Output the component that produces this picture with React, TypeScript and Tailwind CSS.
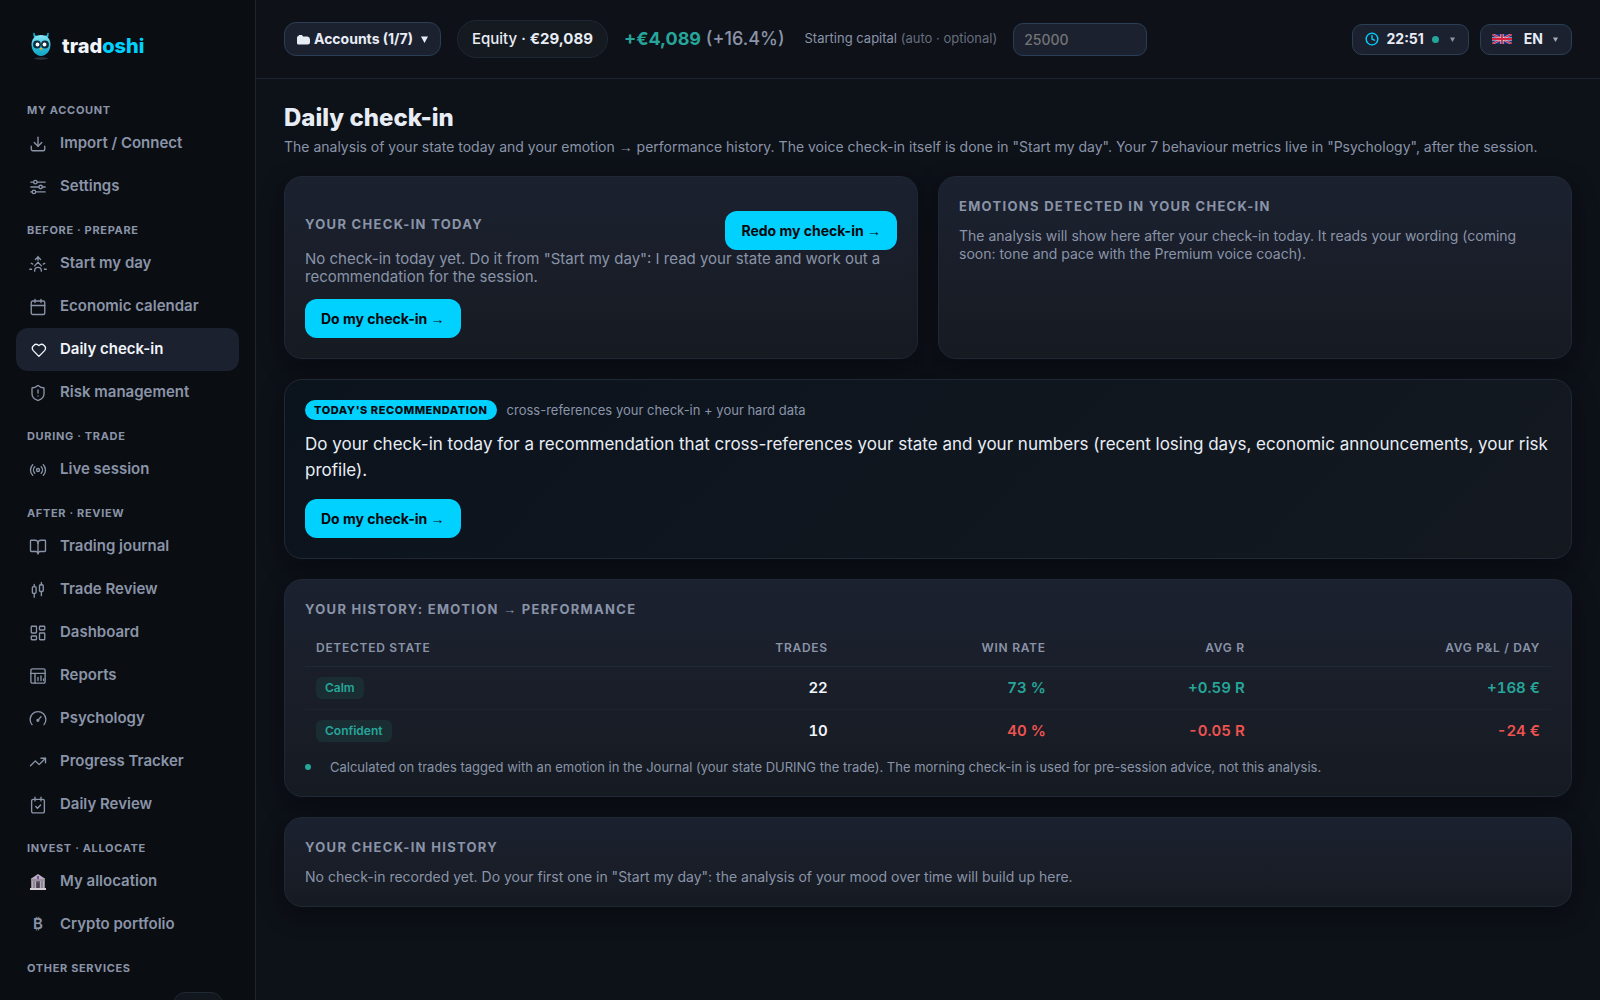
import type { ReactNode } from "react"
import clsx from "clsx"
import {
    BookOpen,
    Calendar,
    Clock,
    Download,
    LayoutDashboard,
    Radio,
    ShieldAlert,
    TrendingUp,
} from "lucide-react"

interface NavItem {
    label: string
    icon: ReactNode
    active?: boolean
}

interface NavGroup {
    title: string
    items: NavItem[]
}

const Icon = ({ children }: { children: ReactNode }) => (
    <svg
        width="18"
        height="18"
        viewBox="0 0 24 24"
        fill="none"
        stroke="currentColor"
        strokeWidth="1.8"
        strokeLinecap="round"
        strokeLinejoin="round"
        aria-hidden="true"
    >
        {children}
    </svg>
)

const SlidersIcon = () => (
    <Icon>
        <path d="M2.500 5.500H6M11 5.500h10.500M2.500 12H13M18 12h3.500M2.500 18.500H4M9 18.500h12.500" />
        <circle cx="8.500" cy="5.500" r="2.300" />
        <circle cx="15.500" cy="12" r="2.300" />
        <circle cx="6.500" cy="18.500" r="2.300" />
    </Icon>
)

const SunriseIcon = () => (
    <Icon>
        <path d="M12 2v5M8.500 6 12 2.500 15.500 6" />
        <path d="M7.500 14.500 12 9.500l4.500 5M7.500 21.500c0-3 1.500-5 4.500-5s4.500 2 4.500 5" />
        <path d="M3 11l2 1.200M21 11l-2 1.200M1 19h2.500M20.500 19H23" />
    </Icon>
)

const HeartIcon = () => (
    <Icon>
        <path d="M13.200 20.500 5.700 12.800A5 5 0 0 1 13.200 6.200a5 5 0 0 1 7.500 6.600Z" />
    </Icon>
)

const CandlesIcon = () => (
    <Icon>
        <rect x="4.500" y="7.500" width="5" height="9" rx="1.500" />
        <rect x="14" y="5" width="5" height="9" rx="1.500" />
        <path d="M7 4.500v3M7 16.500v5M16.500 2v3M16.500 14v5.500" />
    </Icon>
)

const ReportIcon = () => (
    <Icon>
        <rect x="2.500" y="2.500" width="19" height="19" rx="2" />
        <path d="M2.500 8.500h19M8 8.500v13M12 14v4M16 12v6M19.500 16v2" />
    </Icon>
)

const GaugeIcon = () => (
    <Icon>
        <path d="M4 19.500a10.500 10.500 0 1 1 16 0" />
        <path d="m12 13.500 4-4.500" />
        <circle cx="11.800" cy="13.800" r="1.200" fill="currentColor" />
    </Icon>
)

const ChecklistIcon = () => (
    <Icon>
        <rect x="3.500" y="4.500" width="17" height="18" rx="2" />
        <path d="M8 1.500v5M16 1.500v5M9 14l2.300 2.300L15.500 12" />
    </Icon>
)

const BankIcon = () => (
    <svg width="18" height="18" viewBox="0 0 18 18" aria-hidden="true">
        <path d="M9 1 1.500 6h15Z" fill="#b9aebd" />
        <path d="M2 6h14v2H2Z" fill="#9a909f" />
        <path d="M2 8h14v7H2Z" fill="#6d6473" />
        <path d="M2.500 8h2v7h-2ZM5.500 8H7v7H5.500ZM11 8h1.500v7H11ZM13.500 8h2v7h-2Z" fill="#b5abba" />
        <path d="M7.500 9.500h3V15h-3Z" fill="#4a4053" />
        <path d="M8 3h2v3H8Z" fill="#7b4fa3" />
        <path d="M1 15h16v2H1Z" fill="#d6cdd8" />
    </svg>
)

const OwlLogo = () => (
    <svg width="22" height="28" viewBox="0 0 22 28" aria-hidden="true">
        <defs>
            <linearGradient id="owl-body" x1="0" y1="0" x2="0" y2="1">
                <stop offset="0" stopColor="#8fe6f5" />
                <stop offset="0.5" stopColor="#35bfdc" />
                <stop offset="1" stopColor="#12a5c6" />
            </linearGradient>
        </defs>
        <ellipse cx="11" cy="26.500" rx="7" ry="1.200" fill="#2b3440" />
        <path
            d="M4.500 5 4 1.500M17.500 5 18 1.500M5 4 7 4.500M17 4 15 4.500"
            stroke="#22b8da"
            strokeWidth="1.500"
            strokeLinecap="round"
        />
        <path
            d="M11 3c6 0 9.500 4 9.500 9.500 0 6.500-4.500 11.500-9.500 11.500S1.500 19 1.500 12.500C1.500 7 5 3 11 3Z"
            fill="url(#owl-body)"
        />
        <circle cx="7" cy="12.500" r="3.900" fill="#0f2a3a" />
        <circle cx="15" cy="12.500" r="3.900" fill="#0f2a3a" />
        <circle cx="7.500" cy="12.500" r="1.900" fill="#fff" />
        <circle cx="14.500" cy="12.500" r="1.900" fill="#fff" />
        <path d="M9.500 16h3L11 18.500Z" fill="#f5a623" />
    </svg>
)

const AccountsIcon = () => (
    <svg width="13" height="11" viewBox="0 0 13 11" fill="currentColor" aria-hidden="true">
        <path d="M0 9V3.500Q0 2 1.500 2L2 1h3l1 1.500h4.500Q13 3 13 5.500V8q0 2.500-2.500 2.500h-9Q0 10.500 0 9Z" />
    </svg>
)

const FlagIcon = () => (
    <svg width="20" height="10" viewBox="0 0 20 10" aria-hidden="true">
        <path d="M0 0h20v10H0Z" fill="#1c3380" />
        <path d="M0 0l20 10M20 0L0 10" stroke="#d9d9e6" strokeWidth="2" />
        <path d="M0 0l20 10M20 0L0 10" stroke="#d8203f" strokeWidth="1.200" />
        <path d="M10 0v10M0 5h20" stroke="#e8e8f0" strokeWidth="3" />
        <path d="M10 0v10M0 5h20" stroke="#d8203f" strokeWidth="1.800" />
    </svg>
)

const Caret = ({ size }: { size: number }) => (
    <svg width={size} height={size} viewBox="0 0 6 6" fill="currentColor" aria-hidden="true">
        <path d="M0 .5h6L3 6Z" />
    </svg>
)

const Arrow = () => <span className="font-['Liberation_Sans',sans-serif]">→</span>

const navGroups: NavGroup[] = [
    {
        title: "My account",
        items: [
            { label: "Import / Connect", icon: <Download size={18} strokeWidth={1.8} /> },
            { label: "Settings", icon: <SlidersIcon /> },
        ],
    },
    {
        title: "Before · Prepare",
        items: [
            { label: "Start my day", icon: <SunriseIcon /> },
            { label: "Economic calendar", icon: <Calendar size={18} strokeWidth={1.8} /> },
            { label: "Daily check-in", icon: <HeartIcon />, active: true },
            { label: "Risk management", icon: <ShieldAlert size={18} strokeWidth={1.8} /> },
        ],
    },
    {
        title: "During · Trade",
        items: [{ label: "Live session", icon: <Radio size={18} strokeWidth={1.8} /> }],
    },
    {
        title: "After · Review",
        items: [
            { label: "Trading journal", icon: <BookOpen size={18} strokeWidth={1.8} /> },
            { label: "Trade Review", icon: <CandlesIcon /> },
            { label: "Dashboard", icon: <LayoutDashboard size={18} strokeWidth={1.8} /> },
            { label: "Reports", icon: <ReportIcon /> },
            { label: "Psychology", icon: <GaugeIcon /> },
            { label: "Progress Tracker", icon: <TrendingUp size={18} strokeWidth={1.8} /> },
            { label: "Daily Review", icon: <ChecklistIcon /> },
        ],
    },
    {
        title: "Invest · Allocate",
        items: [
            { label: "My allocation", icon: <BankIcon /> },
            { label: "Crypto portfolio", icon: <span>₿</span> },
        ],
    },
]

const history = [
    { state: "Calm", trades: 22, winRate: "73 %", avgR: "+0.59 R", pnl: "+168 €", up: true },
    { state: "Confident", trades: 10, winRate: "40 %", avgR: "-0.05 R", pnl: "-24 €", up: false },
]

const GroupTitle = ({ children }: { children: ReactNode }) => (
    <h2 className="mt-[15px] mb-1 px-[11px] text-[11px] leading-[15px] font-bold tracking-[0.06em] uppercase text-[#8a94a8]">
        {children}
    </h2>
)

const Sidebar = () => (
    <aside className="sticky top-0 h-screen w-64 shrink-0 overflow-hidden border-r border-[#1c2530] bg-[#0a0d12] px-4">
        <a href="#" className="flex items-center gap-2.5 px-3.5 pt-8 pb-7">
            <OwlLogo />
            <span className="text-xl leading-7 font-extrabold text-[#f1f5fa]">
                trad<span className="text-[#00d1ff]">oshi</span>
            </span>
        </a>
        <nav>
            {navGroups.map((group) => (
                <div key={group.title}>
                    <GroupTitle>{group.title}</GroupTitle>
                    {group.items.map((item) => (
                        <a
                            key={item.label}
                            href="#"
                            aria-current={item.active ? "page" : undefined}
                            className={clsx(
                                "flex h-[43px] items-center gap-3 rounded-xl px-3 text-[15px] font-semibold",
                                item.active ? "bg-[#1c2130] text-[#f1f5fa]" : "text-[#8a94a8]"
                            )}
                        >
                            <span className="flex w-5 justify-center">{item.icon}</span>
                            {item.label}
                        </a>
                    ))}
                </div>
            ))}
            <GroupTitle>Other services</GroupTitle>
            <div className="flex justify-end px-4 pt-3">
                <span className="h-6 w-[50px] rounded-full border border-[#1e2833] bg-[#12171e]" />
            </div>
        </nav>
    </aside>
)

const TopBar = () => (
    <header className="flex items-center border-b border-[#1c2530] bg-[#0e1118] px-7 py-5">
        <button className="flex h-[34px] items-center gap-1 rounded-xl border border-[#2a3f55] bg-[#1c2130] px-3 text-sm font-bold text-[#e8edf5]">
            <AccountsIcon />
            <span className="mr-1">Accounts (1/7)</span>
            <Caret size={7} />
        </button>
        <div className="ml-4 flex h-[38px] items-center rounded-full border border-[#1e2833] bg-[#151a21] px-3.5 text-[15px] font-medium whitespace-pre text-[#e8edf5]">
            Equity · <b className="font-bold">€29,089</b>
        </div>
        <div className="ml-4 text-lg font-medium whitespace-nowrap text-[#8a94a8]">
            <b className="font-bold text-[#26a69a]">+€4,089</b> (+16.4%)
        </div>
        <label className="ml-5 flex items-center gap-4 text-[13px] whitespace-nowrap text-[#8a94a8]">
            <span>
                Starting capital <span className="text-[#666e7d]">(auto · optional)</span>
            </span>
            <input
                type="text"
                placeholder="25000"
                className="h-[33px] w-[134px] rounded-[10px] border border-[#2a3f55] bg-[#1c2130] px-2.5 text-sm font-medium text-[#e8edf5] placeholder:text-[#757575]"
            />
        </label>
        <div className="ml-auto flex items-center gap-[11px] text-sm font-bold text-[#e8edf5]">
            <button className="flex h-[31px] items-center gap-2 rounded-[10px] border border-[#2a3f55] bg-[#1c2130] px-3">
                <Clock size={14} strokeWidth={2.4} className="text-[#00d1ff]" />
                22:51
                <span className="mr-0.5 size-[7px] rounded-full bg-[#26a69a]" />
                <span className="px-px text-[#8a94a8]">
                    <Caret size={5} />
                </span>
            </button>
            <button className="flex h-[31px] items-center rounded-[10px] border border-[#2a3f55] bg-[#1c2130] px-[11px]">
                <FlagIcon />
                <span className="ml-3">EN</span>
                <span className="mr-0.5 ml-2.5 text-[#a5adbc]">
                    <Caret size={5} />
                </span>
            </button>
        </div>
    </header>
)

const Card = ({ title, className, children }: { title?: ReactNode; className?: string; children: ReactNode }) => (
    <section
        className={clsx(
            "rounded-[18px] border border-[#1f2834] p-5 shadow-[0_8px_24px_rgba(0,0,0,0.35)]",
            className ?? "bg-linear-to-b from-[#1c2130] to-[#161b22]"
        )}
    >
        {title && <CardTitle className="mb-3">{title}</CardTitle>}
        {children}
    </section>
)

const CardTitle = ({ className, children }: { className?: string; children: ReactNode }) => (
    <h2
        className={clsx(
            "text-[13px] leading-[18px] font-bold tracking-widest uppercase text-[#8a94a8]",
            className
        )}
    >
        {children}
    </h2>
)

const PrimaryButton = ({ className, children }: { className?: string; children: ReactNode }) => (
    <button
        className={clsx(
            "h-[39px] rounded-xl bg-[#00d1ff] px-4 text-sm font-bold text-[#05080d]",
            className
        )}
    >
        {children} <Arrow />
    </button>
)

const HistoryTable = () => (
    <table className="w-full border-collapse">
        <thead>
            <tr className="h-[35px] border-b border-[#1e2a35] text-right text-xs tracking-[0.06em] uppercase text-[#8a94a8]">
                <th className="px-[11px] text-left font-semibold">Detected state</th>
                <th className="px-[11px] font-semibold">Trades</th>
                <th className="px-[11px] font-semibold">Win rate</th>
                <th className="px-[11px] font-semibold">Avg R</th>
                <th className="px-[11px] font-semibold">Avg P&L / day</th>
            </tr>
        </thead>
        <tbody>
            {history.map((row) => {
                const tone = row.up ? "text-[#26a69a]" : "text-[#ef5350]"

                return (
                    <tr
                        key={row.state}
                        className="h-[43px] border-b border-[#1d242e] text-right text-[15px] font-semibold tabular-nums last:border-b-0"
                    >
                        <td className="px-[11px] text-left">
                            <span className="inline-block rounded-md bg-[#1a2d33] px-[9px] text-xs leading-[22px] text-[#26a69a]">
                                {row.state}
                            </span>
                        </td>
                        <td className="px-[11px] text-[#f1f5fa]">{row.trades}</td>
                        <td className={clsx("px-[11px]", tone)}>{row.winRate}</td>
                        <td className={clsx("px-[11px]", tone)}>{row.avgR}</td>
                        <td className={clsx("px-[11px]", tone)}>{row.pnl}</td>
                    </tr>
                )
            })}
        </tbody>
    </table>
)

const App = () => {
    return (
        <div className="flex min-h-screen bg-[#0d1118] font-['Inter','Noto_Sans',sans-serif] text-[#e8edf5]">
            <Sidebar />
            <div className="min-w-0 flex-1">
                <TopBar />
                <main className="px-7 pt-6 pb-10 text-sm leading-[18px] text-[#8a94a8]">
                    <h1 className="text-2xl leading-[30px] font-extrabold text-[#e8edf5]">
                        Daily check-in
                    </h1>
                    <p className="mt-[5px]">
                        The analysis of your state today and your emotion <Arrow /> performance
                        history. The voice check-in itself is done in "Start my day". Your 7 behaviour
                        metrics live in "Psychology", after the session.
                    </p>

                    <div className="mt-5 flex flex-col gap-5">
                        <div className="grid grid-cols-2 gap-5">
                            <Card>
                                <div className="flex items-center justify-between">
                                    <CardTitle>Your check-in today</CardTitle>
                                    <PrimaryButton className="mt-3.5">Redo my check-in</PrimaryButton>
                                </div>
                                <p className="text-[15px] leading-[18px]">
                                    No check-in today yet. Do it from "Start my day": I read your state
                                    and work out a recommendation for the session.
                                </p>
                                <PrimaryButton className="mt-[13px]">Do my check-in</PrimaryButton>
                            </Card>
                            <Card title="Emotions detected in your check-in">
                                <p>
                                    The analysis will show here after your check-in today. It reads your
                                    wording (coming soon: tone and pace with the Premium voice coach).
                                </p>
                            </Card>
                        </div>

                        <Card className="bg-linear-135 from-[#0b131d] to-[#141920]">
                            <div className="flex items-center gap-2.5">
                                <span className="rounded-full bg-[#00d1ff] px-[9px] text-[11px] leading-5 font-extrabold tracking-wider uppercase text-[#05080d]">
                                    Today's recommendation
                                </span>
                                <span className="text-[13px] leading-5">
                                    cross-references your check-in + your hard data
                                </span>
                            </div>
                            <p className="mt-[11px] text-[17px] leading-[26px] text-[#e8edf5]">
                                Do your check-in today for a recommendation that cross-references your
                                state and your numbers (recent losing days, economic announcements, your
                                risk profile).
                            </p>
                            <PrimaryButton className="mt-4">Do my check-in</PrimaryButton>
                        </Card>

                        <Card title={<>Your history: emotion <Arrow /> performance</>}>
                            <HistoryTable />
                            <p className="mt-1.5 flex items-center gap-[19px] text-[13px] leading-[18px]">
                                <span className="size-1.5 rounded-full bg-[#26a69a]" />
                                Calculated on trades tagged with an emotion in the Journal (your state
                                DURING the trade). The morning check-in is used for pre-session advice,
                                not this analysis.
                            </p>
                        </Card>

                        <Card title="Your check-in history">
                            <p>
                                No check-in recorded yet. Do your first one in "Start my day": the
                                analysis of your mood over time will build up here.
                            </p>
                        </Card>
                    </div>
                </main>
            </div>
        </div>
    )
}

export default App
